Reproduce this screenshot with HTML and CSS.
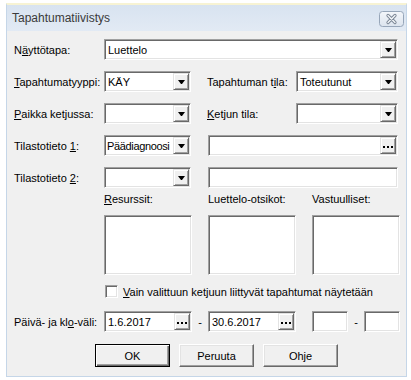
FILE: index.html
```html
<!DOCTYPE html>
<html lang="fi">
<head>
  <meta charset="UTF-8">
  <title>Tapahtumatiivistys</title>
  <link rel="stylesheet" href="styles.css">
</head>
<body>

  <div class="window">
    <div class="titlebar">
      <span class="title">Tapahtumatiivistys</span>
      <span class="close">
        <svg width="25" height="16" viewBox="0 0 25 16">
          <defs>
            <linearGradient id="cg" x1="0" y1="0" x2="0" y2="1">
              <stop offset="0" stop-color="#f3f6fa"/>
              <stop offset="1" stop-color="#dce4ee"/>
            </linearGradient>
          </defs>
          <rect x="0.5" y="0.5" width="24" height="15" rx="3" fill="url(#cg)" stroke="#97a6b9"/>
          <path d="M9 4.5 L16 11.5 M16 4.5 L9 11.5" stroke="#7c8796" stroke-width="3.2" stroke-linecap="round"/>
          <path d="M9 4.5 L16 11.5 M16 4.5 L9 11.5" stroke="#f4f6f9" stroke-width="1.3" stroke-linecap="round"/>
        </svg>
      </span>
    </div>

    <div class="content">
      <div class="rows">
        <div class="row">
          <span class="lbl">N<u>ä</u>yttötapa:</span>
          <div class="combo w-wide"><span class="val">Luettelo</span><span class="drop"></span></div>
        </div>
        <div class="row">
          <span class="lbl"><u>T</u>apahtumatyyppi:</span>
          <div class="combo w-sm"><span class="val">KÄY</span><span class="drop"></span></div>
          <span class="lbl2">Tapahtuman t<u>i</u>la:</span>
          <div class="combo w-md"><span class="val">Toteutunut</span><span class="drop"></span></div>
        </div>
        <div class="row">
          <span class="lbl"><u>P</u>aikka ketjussa:</span>
          <div class="combo w-sm"><span class="val"></span><span class="drop"></span></div>
          <span class="lbl2"><u>K</u>etjun tila:</span>
          <div class="combo w-md"><span class="val"></span><span class="drop"></span></div>
        </div>
        <div class="row">
          <span class="lbl">Tilastotieto <u>1</u>:</span>
          <div class="combo w-sm"><span class="val narrow">Päädiagnoosi</span><span class="drop"></span></div>
          <div class="combo w-field"><span class="val"></span><span class="more"></span></div>
        </div>
        <div class="row">
          <span class="lbl">Tilastotieto <u>2</u>:</span>
          <div class="combo w-sm"><span class="val"></span><span class="drop"></span></div>
          <div class="combo w-field"><span class="val"></span></div>
        </div>
      </div>

      <div class="list-heads">
        <span><u>R</u>esurssit:</span>
        <span>Luettelo-otsikot:</span>
        <span>Vastuulliset:</span>
      </div>
      <div class="lists">
        <div class="listbox"></div>
        <div class="listbox"></div>
        <div class="listbox"></div>
      </div>

      <div class="check-row">
        <span class="checkbox"></span>
        <span><u>V</u>ain valittuun ketjuun liittyvät tapahtumat näytetään</span>
      </div>

      <div class="row date-row">
        <span class="lbl">Päivä- ja kl<u>o</u>-väli:</span>
        <div class="combo w-date"><span class="val">1.6.2017</span><span class="more"></span></div>
        <span class="dash">-</span>
        <div class="combo w-date"><span class="val">30.6.2017</span><span class="more"></span></div>
        <div class="combo w-time"></div>
        <span class="dash">-</span>
        <div class="combo w-time"></div>
      </div>

      <div class="buttons">
        <button class="btn default">OK</button>
        <button class="btn">Peruuta</button>
        <button class="btn">Ohje</button>
      </div>
    </div>
  </div>

</body>
</html>
```

FILE: styles.css
```css
body {
  margin: 0;
  background: #fff;
  font-family: "Liberation Sans", Arial, sans-serif;
  font-size: 11px;
  color: #000;
}
u { text-underline-offset: 1px; }

.window {
  margin: 3px 0 0 6px;
  width: 401px;
  height: 374px;
  box-sizing: border-box;
  border: 1px solid #c5d6e8;
  border-top: 2px solid #f7f3d3;
  background: #f0f0f0;
}
.titlebar {
  height: 26px;
  display: flex;
  align-items: center;
  justify-content: space-between;
  padding: 0 2px 0 5px;
  background: linear-gradient(#d8e3f0, #e2eaf4);
}
.title {
  font-size: 12px;
  color: #3a3a3a;
}
.close { display: flex; margin-top: 1px; }

.content { padding: 8px 0 0 7px; }
.rows {
  display: flex;
  flex-direction: column;
  gap: 11px;
}
.row {
  display: flex;
  align-items: center;
  height: 21px;
}
.lbl { width: 90px; flex-shrink: 0; }
.lbl2 { width: 89px; margin-left: 16px; }

.combo {
  height: 21px;
  box-sizing: border-box;
  display: flex;
  align-items: center;
  padding: 1px;
  background: #fff;
  border: 1px solid;
  border-color: #a0a0a0 #fff #fff #a0a0a0;
  box-shadow: inset 1px 1px 0 #696969, inset -1px -1px 0 #e3e3e3;
}
.combo .val {
  flex: 1;
  padding-left: 2px;
  white-space: nowrap;
  overflow: hidden;
}
.combo .val.narrow {
  padding-left: 1px;
  letter-spacing: -0.35px;
}
.w-wide { width: 294px; }
.w-sm { width: 87px; }
.w-md { width: 102px; }
.w-field { width: 190px; margin-left: 17px; }
.w-date { width: 88px; }
.w-time { width: 36px; }
.w-date + .combo.w-time { margin-left: 16px; }

.drop, .more {
  width: 16px;
  height: 17px;
  box-sizing: border-box;
  flex-shrink: 0;
  display: flex;
  align-items: center;
  justify-content: center;
  background: #f0f0f0;
  border: 1px solid;
  border-color: #e3e3e3 #696969 #696969 #e3e3e3;
  box-shadow: inset 1px 1px 0 #fff, inset -1px -1px 0 #a0a0a0;
}
.drop::after {
  content: "";
  width: 1px;
  border-style: solid;
  border-width: 4px 3px 0 3px;
  border-color: #000 transparent transparent transparent;
  margin-top: 1px;
}
.more::after {
  content: "";
  width: 2px;
  height: 2px;
  background: #000;
  box-shadow: 4px 0 #000, -4px 0 #000;
  margin-top: 3px;
}
.dash {
  width: 16px;
  text-align: center;
}

.list-heads {
  display: flex;
  gap: 16px;
  margin: 4px 0 0 90px;
  height: 15px;
  line-height: 15px;
}
.list-heads span { width: 88px; }
.lists {
  display: flex;
  gap: 16px;
  margin: 8px 0 0 90px;
}
.listbox {
  width: 88px;
  height: 60px;
  box-sizing: border-box;
  background: #fff;
  border: 1px solid;
  border-color: #a0a0a0 #fff #fff #a0a0a0;
  box-shadow: inset 1px 1px 0 #696969, inset -1px -1px 0 #e3e3e3;
}

.check-row {
  display: flex;
  align-items: center;
  gap: 5px;
  height: 13px;
  margin: 10px 0 0 91px;
}
.checkbox {
  width: 13px;
  height: 13px;
  box-sizing: border-box;
  background: #fff;
  border: 1px solid;
  border-color: #a0a0a0 #fff #fff #a0a0a0;
  box-shadow: inset 1px 1px 0 #696969, inset -1px -1px 0 #e3e3e3;
}

.date-row { margin-top: 13px; }

.buttons {
  display: flex;
  gap: 9px;
  margin: 12px 0 0 81px;
}
.btn {
  width: 75px;
  height: 23px;
  padding: 0;
  font-family: inherit;
  font-size: 11px;
  color: #000;
  background: #f0f0f0;
  border: 1px solid;
  border-color: #fff #696969 #696969 #fff;
  box-shadow: inset -1px -1px 0 #a0a0a0, inset 1px 1px 0 #e3e3e3;
}
.btn.default {
  border: 1px solid #000;
  box-shadow: inset 1px 1px 0 #fff, inset -1px -1px 0 #696969, inset -2px -2px 0 #a0a0a0;
}
```
